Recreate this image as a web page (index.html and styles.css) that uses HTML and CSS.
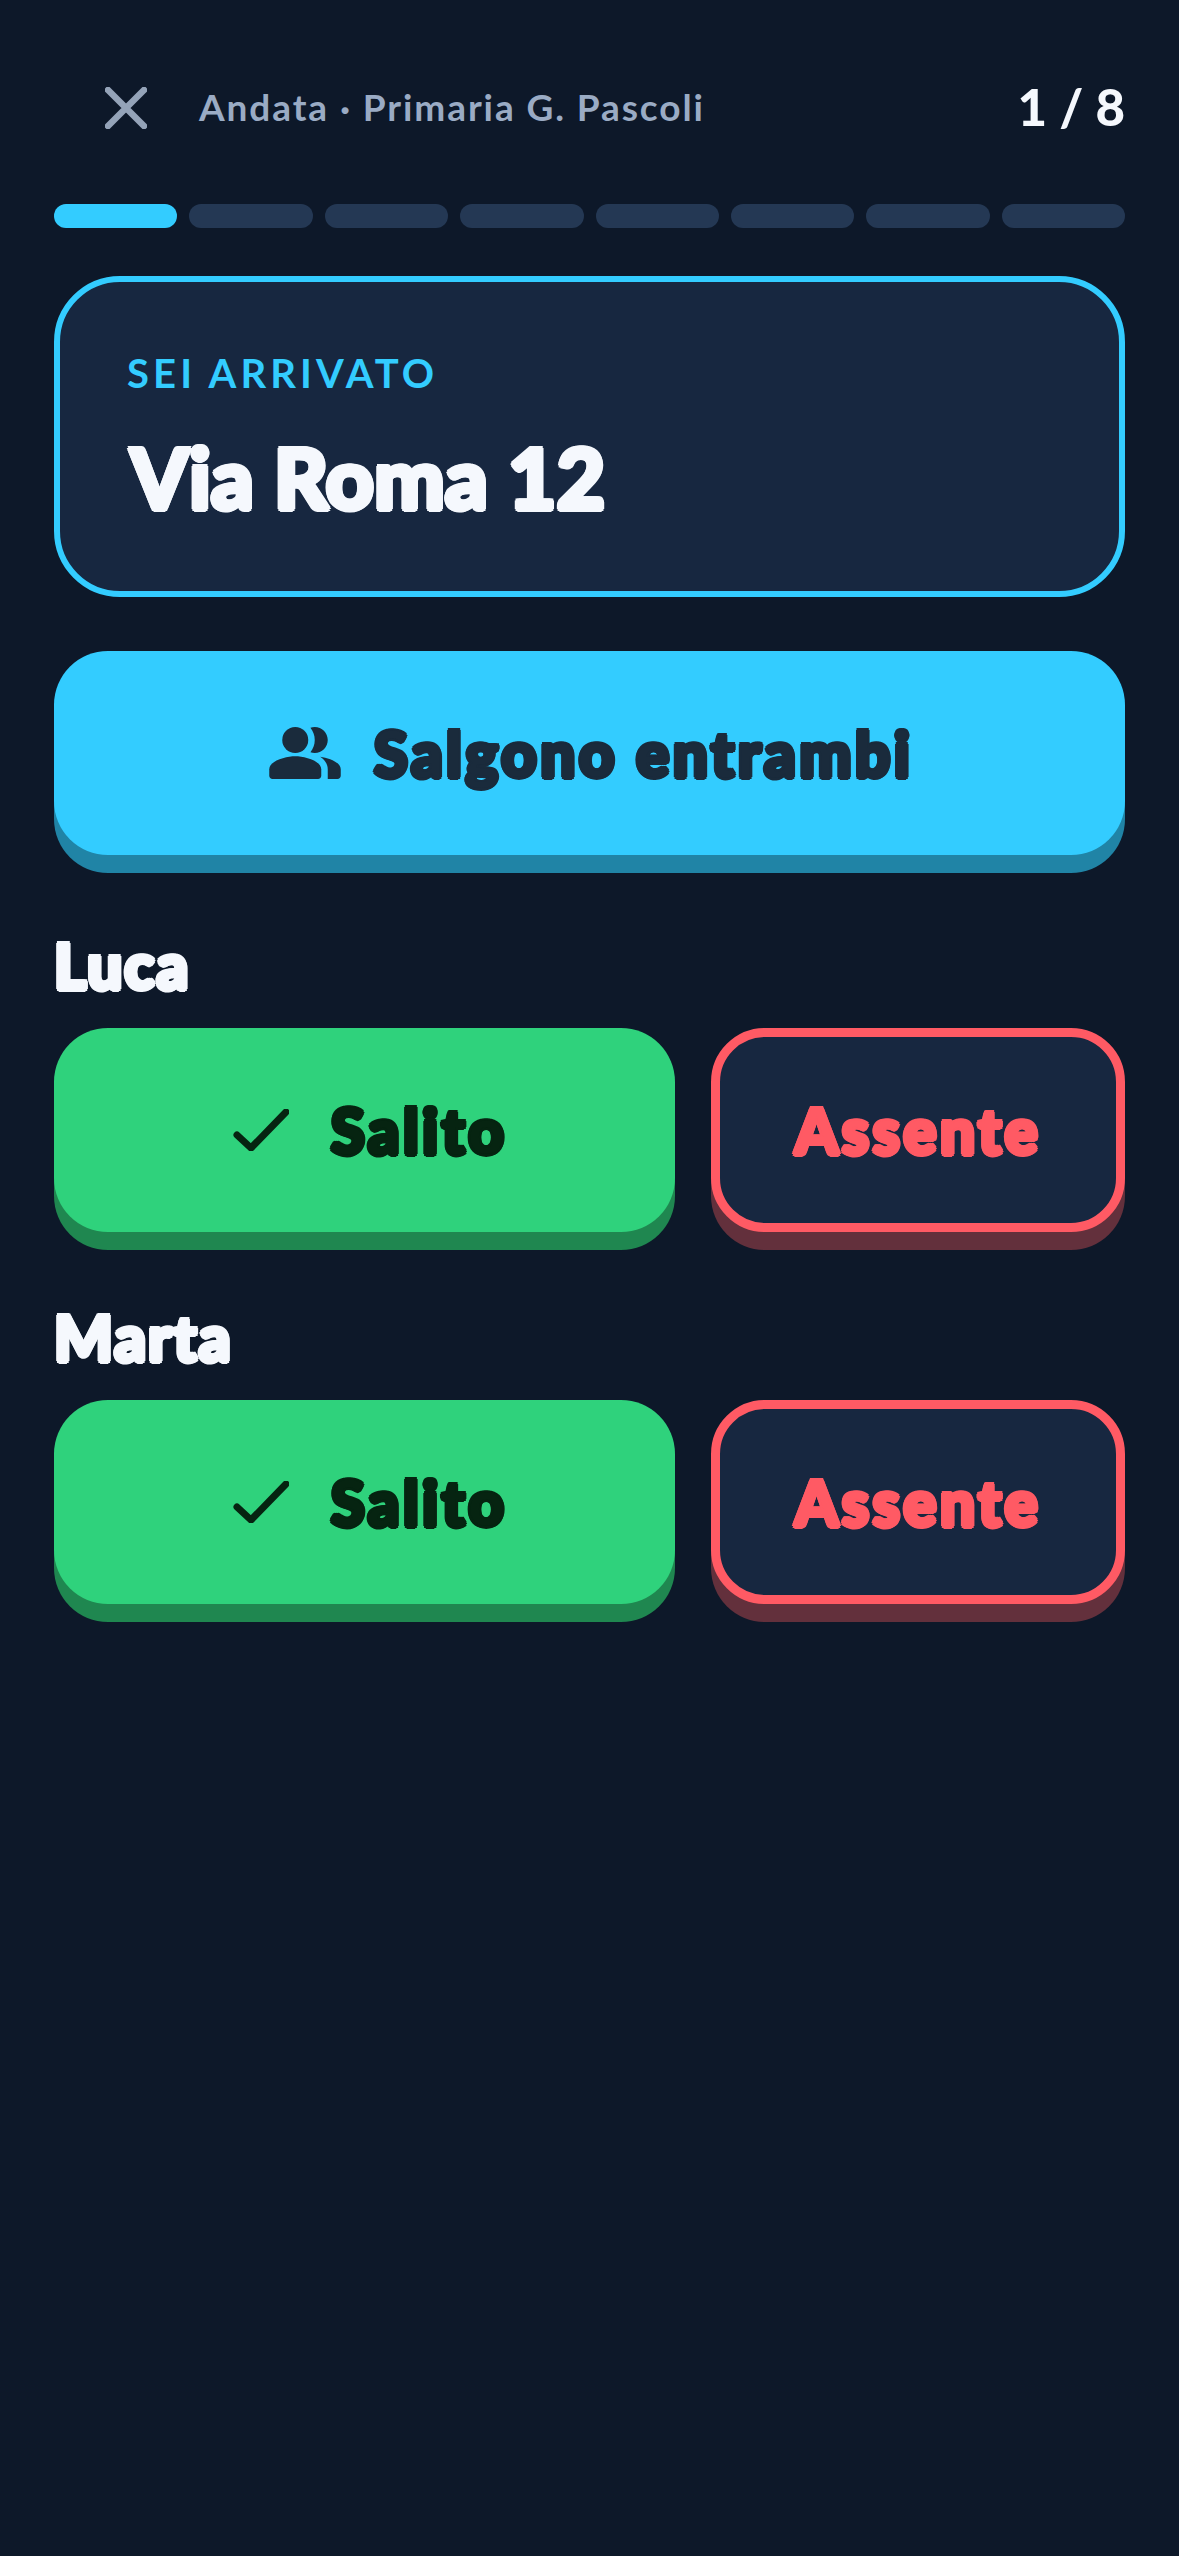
FILE: index.html
```html
<!DOCTYPE html>
<html lang="it">
<head>
    <meta charset="UTF-8">
    <meta name="viewport" content="width=device-width, initial-scale=1.0">
    <title>Andata - Primaria G. Pascoli</title>
    <link rel="stylesheet" href="styles.css">
</head>
<body>
    <div class="screen">
        <header class="topbar">
            <svg class="close-icon" viewBox="0 0 42 42" aria-hidden="true">
                <path d="M3 3 39 39M39 3 3 39"/>
            </svg>
            <span class="route-name">Andata · Primaria G. Pascoli</span>
            <span class="stop-count">1 / 8</span>
        </header>

        <div class="progress">
            <span class="step active"></span>
            <span class="step"></span>
            <span class="step"></span>
            <span class="step"></span>
            <span class="step"></span>
            <span class="step"></span>
            <span class="step"></span>
            <span class="step"></span>
        </div>

        <section class="stop-card">
            <p class="stop-label">SEI ARRIVATO</p>
            <h1 class="stop-address">Via Roma 12</h1>
        </section>

        <button class="btn btn-all">
            <svg class="group-icon" viewBox="0 0 24 24" aria-hidden="true">
                <path d="M16.67 13.13C18.04 14.06 19 15.32 19 17v3h3c.55 0 1-.45 1-1v-2c0-2.18-3.57-3.47-6.33-3.87z"/>
                <circle cx="9" cy="8" r="4"/>
                <path d="M15 12c2.21 0 4-1.79 4-4s-1.79-4-4-4c-.47 0-.91.1-1.33.24C14.5 5.27 15 6.58 15 8s-.5 2.73-1.33 3.76c.42.14.86.24 1.33.24z"/>
                <path d="M9 13c-2.67 0-8 1.34-8 4v2c0 .55.45 1 1 1h14c.55 0 1-.45 1-1v-2c0-2.66-5.33-4-8-4z"/>
            </svg>
            <span>Salgono entrambi</span>
        </button>

        <section class="kid">
            <h2 class="kid-name">Luca</h2>
            <div class="kid-actions">
                <button class="btn btn-ok">
                    <svg class="check-icon" viewBox="-12 0 67 42" aria-hidden="true">
                        <path d="M3 26 17 39 52 3"/>
                    </svg>
                    <span>Salito</span>
                </button>
                <button class="btn btn-absent">Assente</button>
            </div>
        </section>

        <section class="kid">
            <h2 class="kid-name">Marta</h2>
            <div class="kid-actions">
                <button class="btn btn-ok">
                    <svg class="check-icon" viewBox="-12 0 67 42" aria-hidden="true">
                        <path d="M3 26 17 39 52 3"/>
                    </svg>
                    <span>Salito</span>
                </button>
                <button class="btn btn-absent">Assente</button>
            </div>
        </section>
    </div>
</body>
</html>
```
FILE: styles.css
```css
* {
    box-sizing: border-box;
}

body {
    margin: 0;
    background-color: #0d1829;
    color: #f5f8fd;
    font-family: Lato, "Noto Sans", sans-serif;
}

.screen {
    min-height: 2556px;
    padding: 78px 54px 0;
}

.topbar {
    display: flex;
    align-items: center;
    height: 60px;
    padding-left: 51px;
}

.close-icon {
    width: 42px;
    height: 42px;
    flex-shrink: 0;
}

.close-icon path {
    fill: none;
    stroke: #94a3b8;
    stroke-width: 6.5;
    stroke-linecap: round;
}

.route-name {
    margin-left: 52px;
    margin-top: -3px;
    font-size: 37px;
    font-weight: 700;
    letter-spacing: 1.9px;
    color: #9aabc4;
}

.stop-count {
    margin-left: auto;
    margin-top: -3px;
    font-size: 51px;
    font-weight: 900;
    letter-spacing: 0;
}

.progress {
    display: flex;
    gap: 12px;
    margin-top: 66px;
}

.step {
    flex: 1;
    height: 24px;
    border-radius: 12px;
    background-color: #243854;
}

.step.active {
    background-color: #33ccff;
}

.stop-card {
    height: 321px;
    margin-top: 48px;
    padding: 67px 67px 0;
    border: 6px solid #33ccff;
    border-radius: 66px;
    background-color: #172740;
}

.stop-label {
    margin: 0;
    font-size: 40px;
    line-height: 48px;
    font-weight: 700;
    letter-spacing: 4.1px;
    color: #33ccff;
}

/* no rounded display face here, so fatten the heavy text with a ring of shadows */
.stop-address,
.kid-name,
.btn {
    font-family: Lato, "Noto Sans", sans-serif;
    font-weight: 900;
    text-shadow:
        2.5px 0 currentColor,
        -2.5px 0 currentColor,
        0 2.5px currentColor,
        0 -2.5px currentColor,
        1.8px 1.8px currentColor,
        -1.8px 1.8px currentColor,
        1.8px -1.8px currentColor,
        -1.8px -1.8px currentColor;
}

.stop-address {
    margin: 35px 0 0;
    padding-left: 3px;
    font-size: 84px;
    line-height: 90px;
    letter-spacing: 0;
}

.btn {
    display: flex;
    align-items: center;
    justify-content: center;
    height: 204px;
    margin: 0;
    padding: 0;
    border: 0;
    border-radius: 54px;
    font-size: 62px;
    letter-spacing: 3.4px;
}

.btn-all {
    width: 100%;
    gap: 30px;
    margin-top: 54px;
    background-color: #33ccff;
    box-shadow: 0 18px 0 #2084a6;
    color: #1a2b3c;
}

.group-icon {
    width: 78px;
    height: 78px;
    fill: #1a2b3c;
}

.kid {
    margin-top: 70px;
}

.btn-all + .kid {
    margin-top: 75px;
}

.kid-name {
    margin: 0;
    font-size: 62px;
    line-height: 70px;
    letter-spacing: 2px;
}

.kid-actions {
    display: flex;
    gap: 36px;
    margin-top: 28px;
}

.btn-ok {
    flex: 0 0 621px;
    gap: 42px;
    background-color: #2fd27c;
    box-shadow: 0 18px 0 #1f8750;
    color: #062411;
}

.check-icon {
    width: 67px;
    height: 42px;
}

.check-icon path {
    fill: none;
    stroke: #062411;
    stroke-width: 7;
    stroke-linecap: round;
    stroke-linejoin: round;
}

.btn-absent {
    flex: 1;
    border: 9px solid #ff5a64;
    background-color: #172740;
    box-shadow: 0 18px 0 #63303c;
    color: #ff5a64;
}
```
